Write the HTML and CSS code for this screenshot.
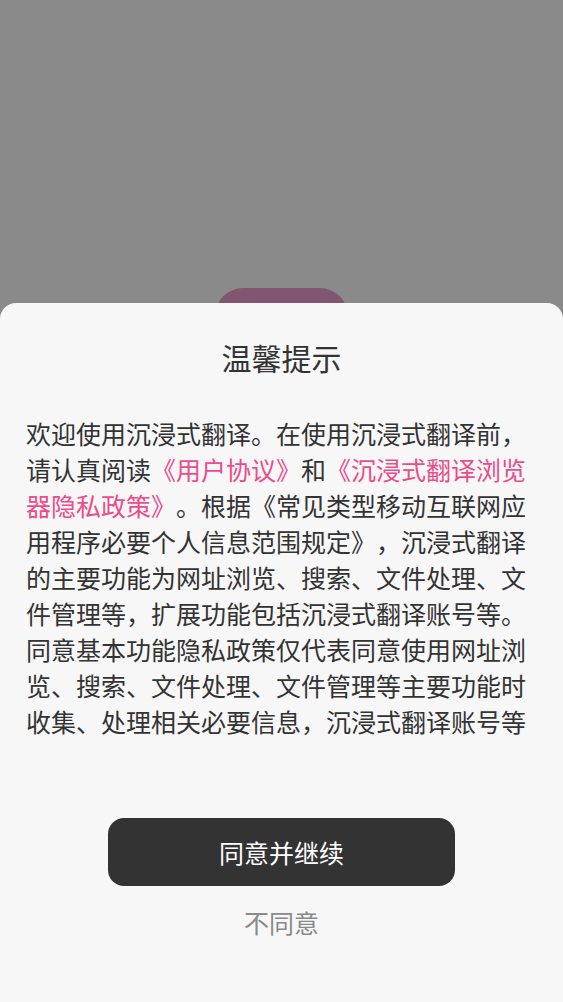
FILE: index.html
```html
<!DOCTYPE html>
<html>

<head>
    <title>沉浸式翻译</title>
    <meta charset="utf-8">
    <meta name="viewport" content="width=device-width, initial-scale=1.0">
    <link rel="stylesheet" href="styles.css">
</head>

<body>

    <div class="app">
        <div class="behind">
            <div class="start-btn"></div>
        </div>
    </div>

    <div class="overlay"></div>

    <div class="sheet">
        <h1 class="title">温馨提示</h1>

        <div class="content">
            <p>欢迎使用沉浸式翻译。在使用沉浸式翻译前，请认真阅读<a href="#">《用户协议》</a>和<a href="#">《沉浸式翻译浏览器隐私政策》</a>。根据《常见类型移动互联网应用程序必要个人信息范围规定》，沉浸式翻译的主要功能为网址浏览、搜索、文件处理、文件管理等，扩展功能包括沉浸式翻译账号等。同意基本功能隐私政策仅代表同意使用网址浏览、搜索、文件处理、文件管理等主要功能时收集、处理相关必要信息，沉浸式翻译账号等扩展功能需要您使用时另行同意。</p>
        </div>

        <div class="actions">
            <button class="agree">同意并继续</button>
            <button class="disagree">不同意</button>
        </div>
    </div>

</body>

</html>
```

FILE: styles.css
```css
html,
body {
    margin: 0;
    height: 100%;
}

body {
    font-family: "Noto Sans CJK SC", "Noto Sans", sans-serif;
    background-color: #ffffff;
    overflow: hidden;
    text-spacing-trim: space-all;
}

.app {
    height: 100%;
    background-color: #ffffff;
}

.behind {
    display: flex;
    justify-content: center;
    padding-top: 288px;
}

.start-btn {
    width: 133px;
    height: 60px;
    border-radius: 28px;
    background-color: #f0a0d0;
}

.overlay {
    position: fixed;
    inset: 0;
    background-color: rgba(0, 0, 0, 0.46);
}

.sheet {
    position: fixed;
    left: 0;
    right: 0;
    bottom: 0;
    top: 303px;
    background-color: #f7f7f7;
    border-radius: 16px 16px 0 0;
    padding: 0 26px;
    display: flex;
    flex-direction: column;
}

.title {
    margin: 0;
    padding-top: 33px;
    font-size: 30px;
    line-height: 42px;
    font-weight: normal;
    text-align: center;
    color: #333333;
}

.content {
    margin-top: 37px;
    height: 324px;
    overflow: hidden;
}

.content p {
    margin: 0;
    font-size: 25px;
    line-height: 36px;
    color: #333333;
    text-spacing-trim: space-all;
}

.content a {
    color: #ec4c8a;
    text-decoration: none;
}

.actions {
    display: flex;
    flex-direction: column;
    align-items: center;
    margin-top: 79px;
}

.agree {
    width: 347px;
    height: 68px;
    border: none;
    border-radius: 16px;
    background-color: #333333;
    color: #ffffff;
    font-family: inherit;
    font-size: 25px;
}

.disagree {
    margin-top: 18px;
    border: none;
    background: none;
    padding: 0;
    font-family: inherit;
    font-size: 25px;
    line-height: 36px;
    color: #8a8a8a;
}
```
